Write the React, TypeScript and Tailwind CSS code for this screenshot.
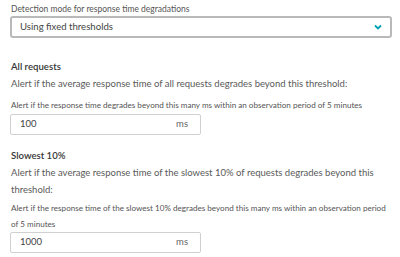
import React from "react";

function MsInput({ value }: { value: string }) {
  return (
    <div className="w-[191px] h-[21px] border border-[#d0d0d0] rounded-[2px] flex items-center justify-between pl-[9px] pr-[12px] text-[9.5px] text-[#444]">
      <span>{value}</span>
      <span className="text-[#666]">ms</span>
    </div>
  );
}

export default function App() {
  return (
    <div
      className="w-[400px] h-[257px] bg-white overflow-hidden pl-[10px] pr-[8px]"
      style={{ fontFamily: "Lato, 'Liberation Sans', sans-serif" }}
    >
      {/* detection mode */}
      <div className="pt-[3px] pl-[1px] text-[8.5px] leading-[12px] text-[#555]">
        Detection mode for response time degradations
      </div>
      <div className="mt-[1px] h-[22px] border-2 border-[#b9b9b9] rounded-[3px] flex items-center justify-between pl-[8px] pr-[7px]">
        <span className="text-[9.6px] text-[#444]">Using fixed thresholds</span>
        <svg width="8" height="6" viewBox="0 0 8 6" className="mr-[1px]">
          <path d="M1 1.5 L4 4.5 L7 1.5" fill="none" stroke="#00a1b2" strokeWidth="1.8" />
        </svg>
      </div>

      {/* all requests */}
      <div className="mt-[20px] pl-[1px] text-[9.6px] leading-[17px] font-semibold text-[#353535]">All requests</div>
      <div className="pl-[1px] text-[9.5px] leading-[17px] text-[#5a5a5a]">
        Alert if the average response time of all requests degrades beyond this threshold:
      </div>
      <div className="mt-[5px] pl-[1px] text-[8.1px] leading-[16px] text-[#555]">
        Alert if the response time degrades beyond this many ms within an observation period of 5 minutes
      </div>
      <div className="mt-[1px]">
        <MsInput value="100" />
      </div>

      {/* slowest 10% */}
      <div className="mt-[12px] pl-[1px] text-[9.6px] leading-[17px] font-semibold text-[#353535]">Slowest 10%</div>
      <div className="pl-[1px] text-[9.5px] leading-[17px] text-[#5a5a5a]">
        Alert if the average response time of the slowest 10% of requests degrades beyond this threshold:
      </div>
      <div className="mt-[2px] pl-[1px] text-[8.1px] leading-[16px] text-[#555]">
        Alert if the response time of the slowest 10% degrades beyond this many ms within an observation period of 5 minutes
      </div>
      <div>
        <MsInput value="1000" />
      </div>
    </div>
  );
}
